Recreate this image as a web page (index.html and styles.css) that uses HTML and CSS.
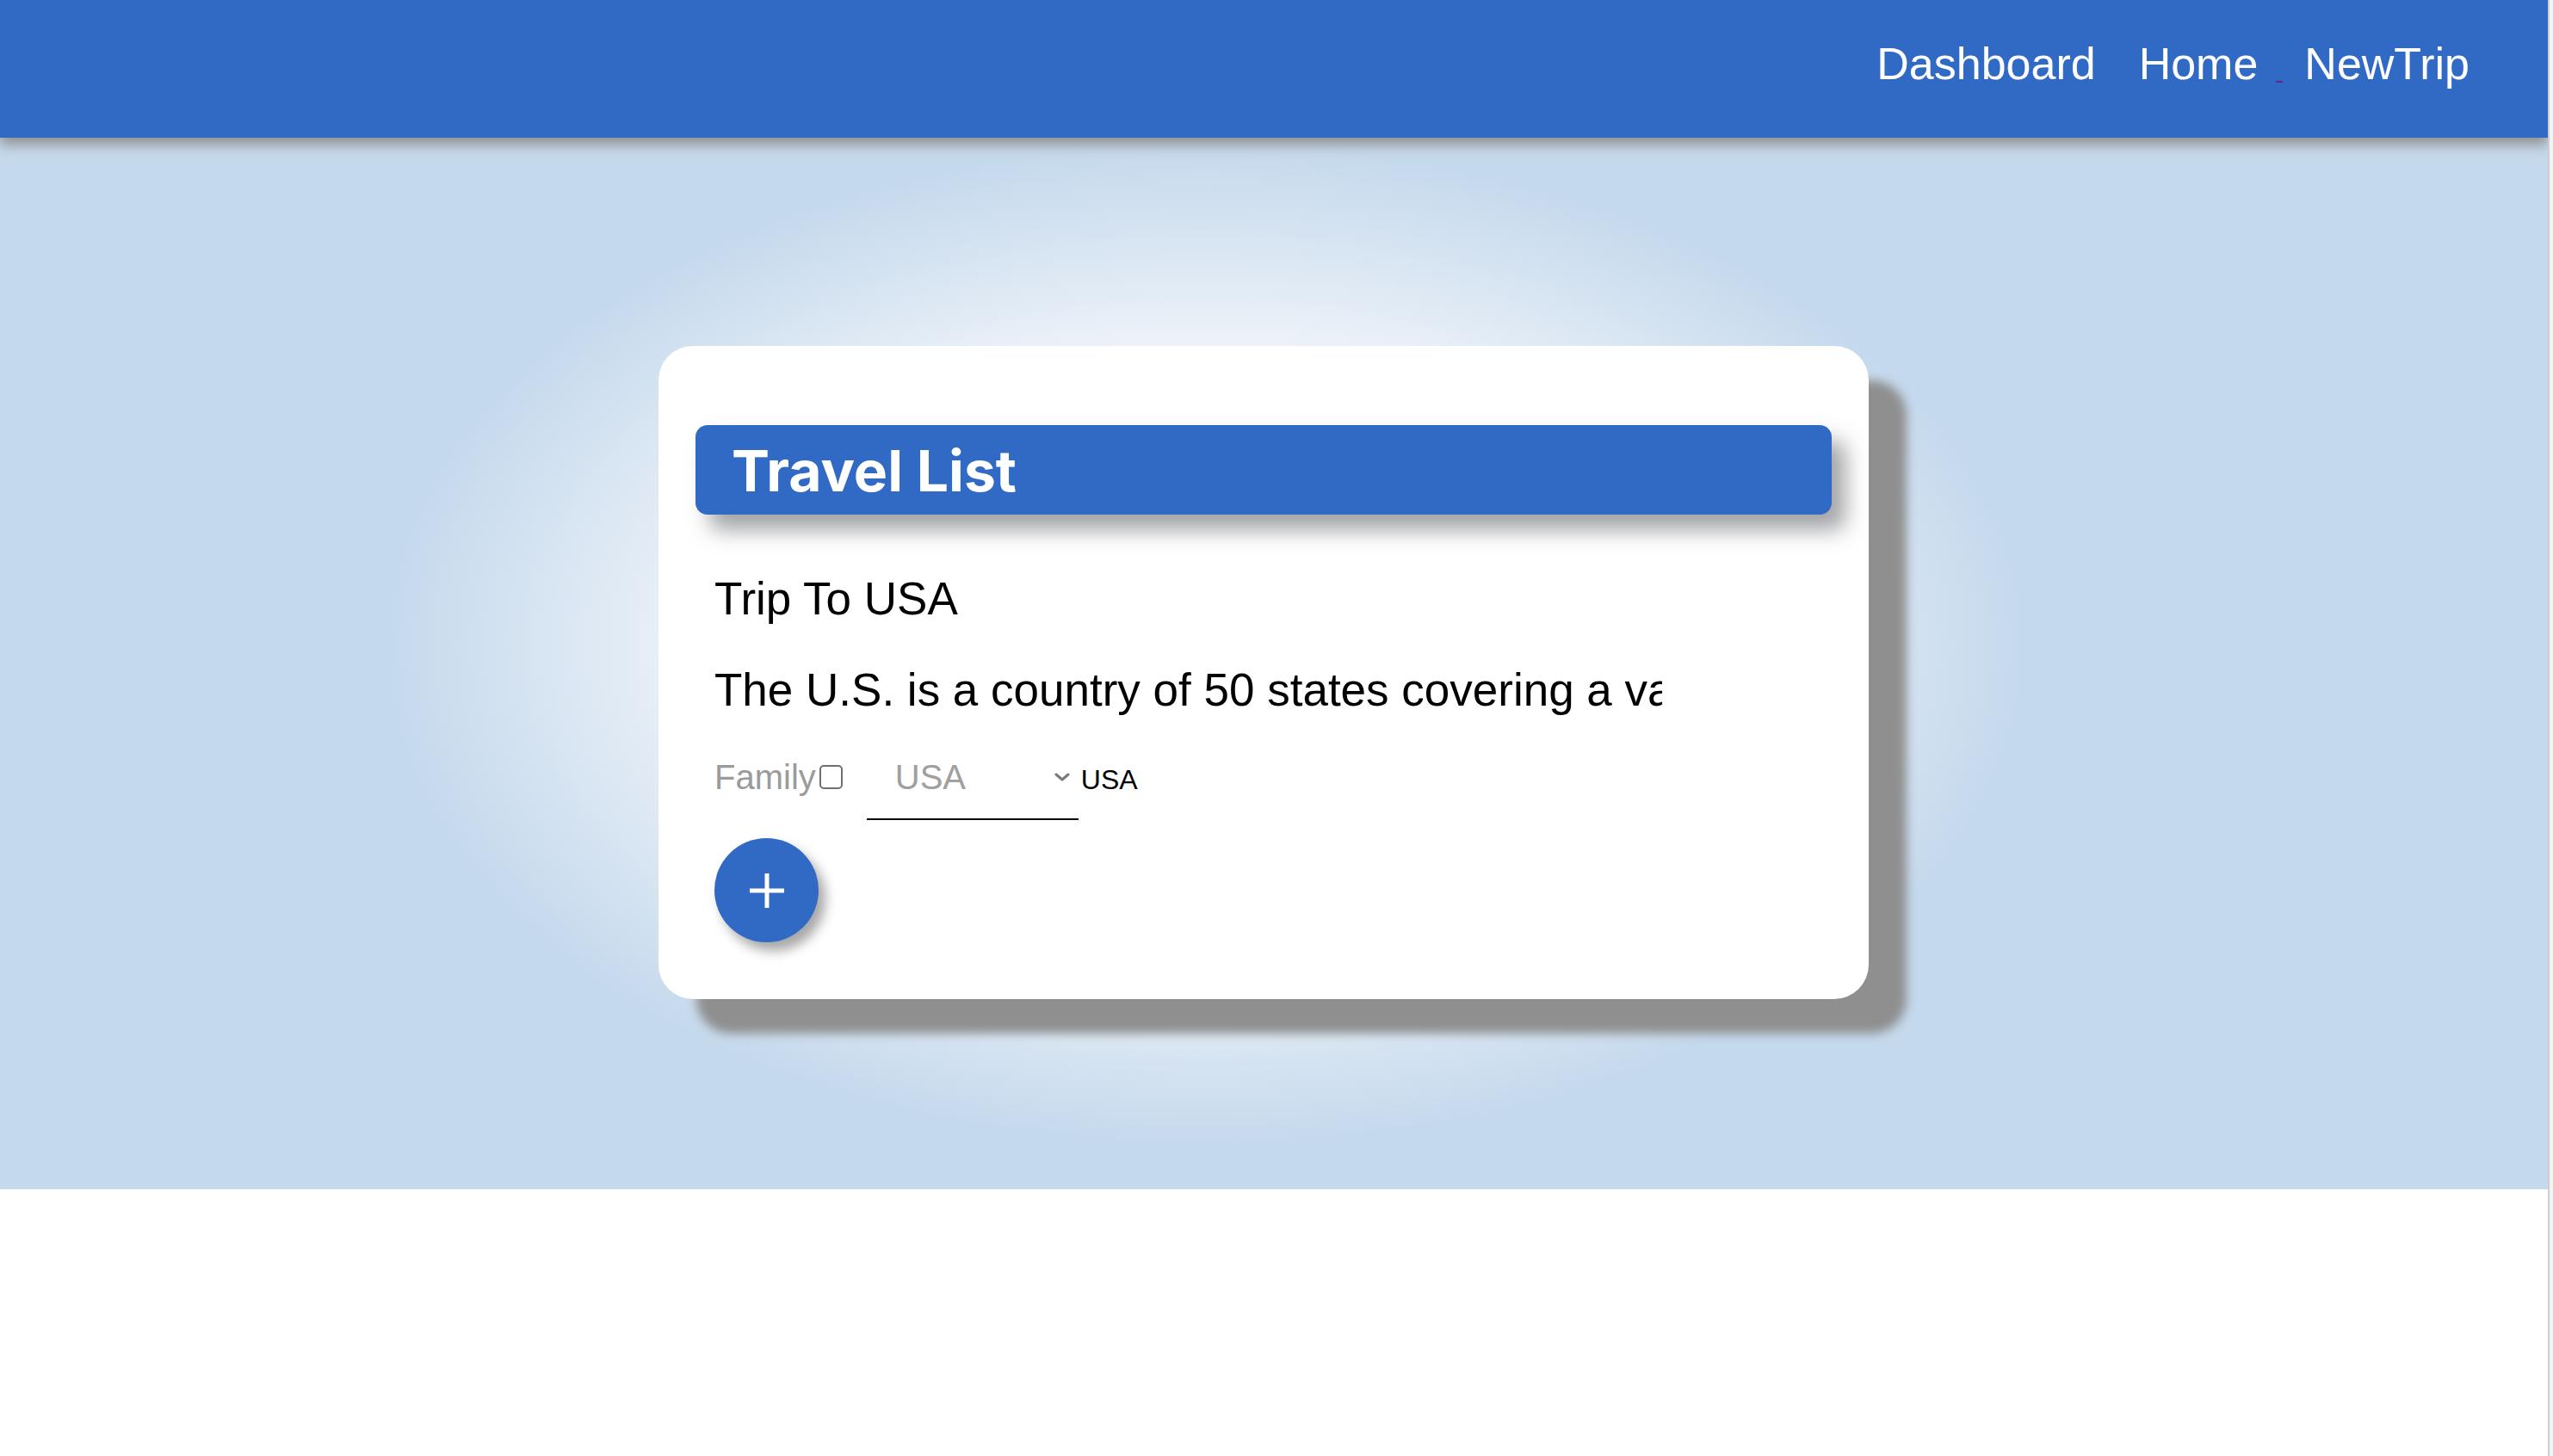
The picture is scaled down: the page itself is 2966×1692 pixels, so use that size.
FILE: index.html
```html
<!DOCTYPE html>
<html lang="en">
<head>
<meta charset="utf-8">
<title>Travel List</title>
<link rel="stylesheet" href="styles.css">
</head>
<body>
  <nav class="navbar">
    <a class="nav-link nav-dashboard" href="#">Dashboard</a>
    <a class="nav-link" href="#">Home</a>
    <a class="nav-gap" href="#"></a>
    <a class="nav-link" href="#">NewTrip</a>
  </nav>
  <main class="stage">
    <section class="card">
      <h1 class="card-title">Travel List</h1>
      <div class="card-body">
        <p class="trip-name">Trip To USA</p>
        <p class="trip-desc">The U.S. is a country of 50 states covering a vast swath of North America</p>
        <div class="trip-row">
          <span class="family-label">Family</span>
          <span class="checkbox"></span>
          <div class="select">
            <span class="select-value">USA</span>
            <svg class="chevron" width="18" height="10" viewBox="0 0 18 10"><path d="M2 2 L9 8 L16 2" fill="none" stroke="#7a7a7a" stroke-width="3" stroke-linecap="round" stroke-linejoin="round"/></svg>
          </div>
          <span class="country">USA</span>
        </div>
        <button class="add-btn" type="button" aria-label="Add">
          <svg width="42" height="42" viewBox="0 0 42 42"><path d="M21 1 V41 M1 21 H41" stroke="#ffffff" stroke-width="5"/></svg>
        </button>
      </div>
    </section>
  </main>
</body>
</html>
```
FILE: styles.css
```css
html {
  background: #f3f3f3;
}
body {
  margin: 0 4px 0 0;
  min-height: 1692px;
  background: #ffffff;
  border-right: 2px solid #cecece;
  font-family: "Liberation Sans", Arial, sans-serif;
}
.navbar {
  position: relative;
  z-index: 2;
  height: 160px;
  box-sizing: border-box;
  padding: 45px 91px 0 0;
  background: #316ac4;
  display: flex;
  justify-content: flex-end;
  align-items: flex-start;
  box-shadow: 0 8px 14px #8f8f8f;
}
.nav-link {
  color: #ffffff;
  text-decoration: none;
  font-size: 52px;
  line-height: 58px;
}
.nav-dashboard {
  margin-right: 50px;
}
.nav-gap {
  display: block;
  width: 8px;
  height: 2px;
  margin: 49px 25px 0 21px;
  background: #5a2a8a;
}
.stage {
  position: relative;
  z-index: 1;
  height: 1222px;
  box-sizing: border-box;
  padding: 242px 0 0 765px;
  background-color: #c5d9ed;
  background-image: radial-gradient(ellipse 950px 580px at 1400px 590px, #ffffff 0%, #f3f6fb 55%, #dbe7f3 78%, #c5d9ed 100%);
}
.card {
  width: 1406px;
  height: 759px;
  box-sizing: border-box;
  padding: 92px 43px 0 43px;
  background: #ffffff;
  border-radius: 40px;
  box-shadow: 44px 40px 12px #8f8f8f;
}
.card-title {
  margin: 0;
  height: 104px;
  padding: 0 42px;
  background: #316ac4;
  border-radius: 14px;
  color: #ffffff;
  font-family: "Inter", "Liberation Sans", sans-serif;
  font-weight: 700;
  font-size: 66px;
  line-height: 106px;
  box-shadow: 16px 18px 24px rgba(70, 74, 82, 0.5);
}
.card-body {
  padding-left: 22px;
}
.trip-name {
  margin: 68px 0 0 0;
  font-size: 53px;
  line-height: 60px;
  color: #000000;
}
.trip-desc {
  margin: 46px 0 0 0;
  width: 1101px;
  font-size: 53px;
  line-height: 60px;
  color: #000000;
  white-space: nowrap;
  overflow: hidden;
}
.trip-row {
  margin-top: 47px;
  display: flex;
  align-items: baseline;
}
.family-label {
  font-size: 40px;
  line-height: 48px;
  color: #9b9b9b;
}
.checkbox {
  display: inline-block;
  width: 23px;
  height: 24px;
  margin-left: 4px;
  border: 2px solid #707070;
  border-radius: 5px;
}
.select {
  margin-left: 28px;
  width: 246px;
  height: 74px;
  box-sizing: border-box;
  padding: 0 10px 0 33px;
  border-bottom: 2px solid #000000;
  display: flex;
  align-items: baseline;
  justify-content: space-between;
}
.select-value {
  font-size: 40px;
  line-height: 48px;
  color: #a0a0a0;
}
.chevron {
  align-self: flex-start;
  margin-top: 19px;
}
.country {
  margin-left: 3px;
  font-size: 32px;
  line-height: 40px;
  color: #000000;
}
.add-btn {
  margin-top: 21px;
  width: 121px;
  height: 121px;
  padding: 0;
  border: none;
  border-radius: 50%;
  background: #316ac4;
  display: flex;
  align-items: center;
  justify-content: center;
  box-shadow: 8px 10px 14px rgba(0, 0, 0, 0.35);
  cursor: pointer;
}
```
